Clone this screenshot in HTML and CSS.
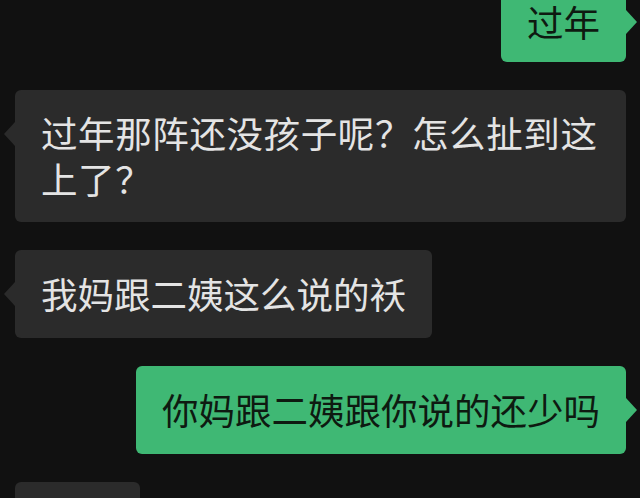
FILE: index.html
```html
<!DOCTYPE html>
<html lang="zh">
<head>
<meta charset="utf-8">
<link rel="stylesheet" href="styles.css">
</head>
<body>
<div class="chat">
  <div class="msg me first"><div class="bubble">过年</div></div>
  <div class="msg other wide"><div class="bubble">过年那阵还没孩子呢？怎么扯到这上了？</div></div>
  <div class="msg other"><div class="bubble">我妈跟二姨这么说的袄</div></div>
  <div class="msg me"><div class="bubble">你妈跟二姨跟你说的还少吗</div></div>
  <div class="msg other last"><div class="bubble stub"></div></div>
</div>
</body>
</html>
```

FILE: styles.css
```css
html, body {
  margin: 0;
  padding: 0;
  background: #111111;
  height: 100%;
  overflow: hidden;
}
.chat {
  display: flex;
  flex-direction: column;
  gap: 28px;
  padding: 0 14px 0 15px;
  margin-top: -22px;
  font-family: "Noto Sans CJK SC", "Noto Sans", sans-serif;
  font-size: 36.5px;
  line-height: 46px;
}
.msg {
  display: flex;
}
.msg.me { justify-content: flex-end; }
.msg.other { justify-content: flex-start; }
.bubble {
  position: relative;
  border-radius: 6px;
  padding: 21px 26px 21px 26px;
  max-width: 560px;
}
.first .bubble {
  padding-bottom: 17px;
}
.other .bubble {
  background: #2b2b2b;
  color: #e4e4e4;
}
.me .bubble {
  background: #3fb874;
  color: #0e1a11;
}
.bubble::after {
  content: "";
  position: absolute;
  top: 32px;
  width: 0;
  height: 0;
  border-top: 12px solid transparent;
  border-bottom: 12px solid transparent;
}
.other .bubble::after {
  left: -11px;
  border-right: 11px solid #2b2b2b;
}
.me .bubble::after {
  right: -11px;
  border-left: 11px solid #3fb874;
}
.wide .bubble {
  box-sizing: border-box;
  width: 612px;
  max-width: 612px;
  padding-top: 20px;
  padding-bottom: 20px;
  padding-right: 24px;
  letter-spacing: 0.6px;
}
.stub {
  width: 125px;
  height: 46px;
  padding: 21px 0;
  box-sizing: content-box;
}
.stub::after { display: none; }
```
